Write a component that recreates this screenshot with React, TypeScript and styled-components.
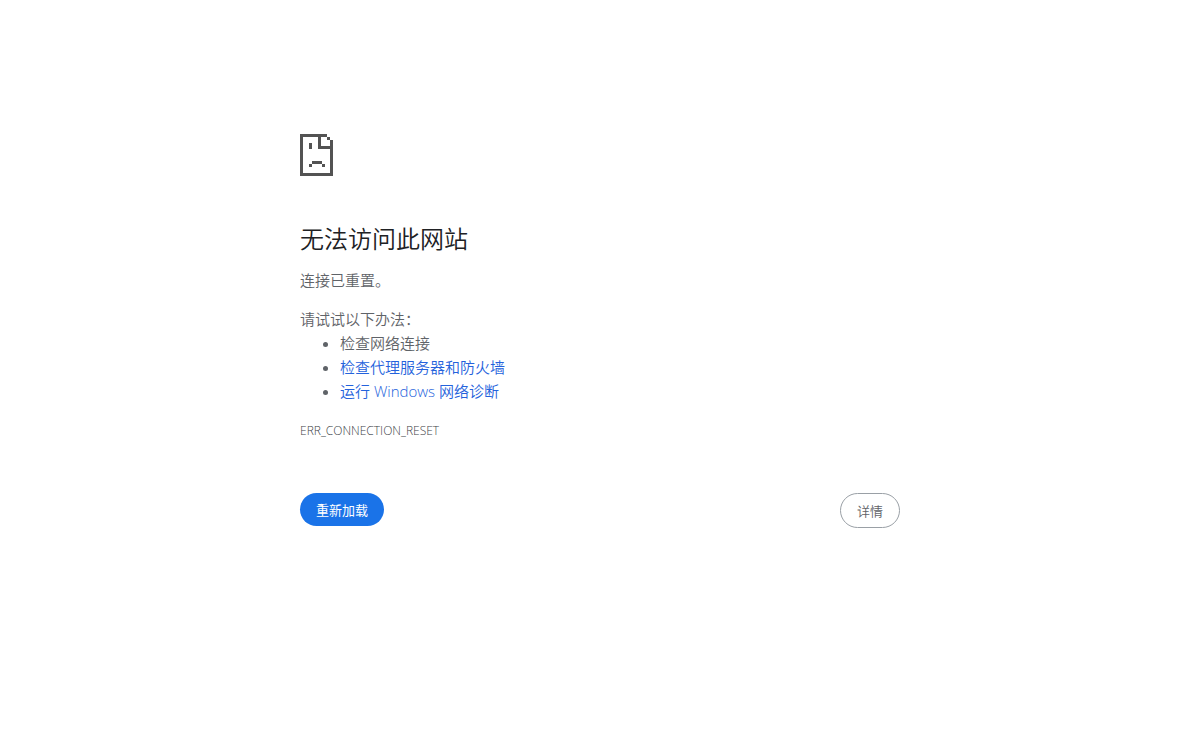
import React from 'react';
import styled, { createGlobalStyle, css } from 'styled-components';

const GlobalStyle = createGlobalStyle`
  body {
    margin: 0;
    background: #fff;
    color: #5f6368;
    font-family: 'Open Sans', 'Noto Sans CJK SC', sans-serif;
    font-size: 15px;
    font-weight: 350;
    line-height: 24px;
  }
`;

const Page = styled.main`
  box-sizing: border-box;
  max-width: 648px;
  margin: 0 auto;
  padding: 134px 24px 24px;
`;

const ErrorIcon = styled.svg`
  display: block;
  width: 33px;
  height: 42px;
  margin-bottom: 48px;
  fill: #535353;
`;

const Title = styled.h1`
  margin: 0 0 14px;
  color: #202124;
  font-size: 24px;
  font-weight: 350;
  line-height: 30px;
`;

const Paragraph = styled.p`
  margin: 0;
`;

const Suggestions = styled.section`
  margin-top: 15px;
`;

const SuggestionList = styled.ul`
  margin: 0;
  padding-left: 40px;
`;

const Link = styled.a`
  color: #2462dc;
  text-decoration: none;
`;

const ErrorCode = styled.p`
  margin: 16px 0 0;
  color: #404347;
  font-size: 12px;
`;

const Actions = styled.div`
  display: flex;
  justify-content: space-between;
  align-items: flex-start;
  margin-top: 50px;
`;

const Button = styled.button<{ $primary?: boolean }>`
  padding: 9px 16px 7px;
  border: 0;
  border-radius: 20px;
  font-family: inherit;
  font-size: 13px;
  font-weight: 350;
  line-height: 17px;
  cursor: pointer;

  ${({ $primary }) =>
    $primary
      ? css`
          background: #1a73e8;
          color: #fff;
          font-weight: 400;
        `
      : css`
          border: 1px solid #9aa0a6;
          background: #fff;
          color: #5f6368;
        `}
`;

export default function App() {
  return (
    <>
      <GlobalStyle />
      <Page>
        <ErrorIcon viewBox="0 0 33 42" shapeRendering="crispEdges" aria-hidden="true">
          <path
            d="M0 0h27v3h-6v9h9V6h3v36H0zM3 3v36h27V15H18V3zM27 3h3v3h-3zM9 9h3v6H9zM12 27h10v3H12zM9 30h3v3H9zM22 30h3v3h-3z"
            fillRule="evenodd"
          />
        </ErrorIcon>
        <Title>无法访问此网站</Title>
        <Paragraph>连接已重置。</Paragraph>
        <Suggestions>
          <Paragraph>请试试以下办法：</Paragraph>
          <SuggestionList>
            <li>检查网络连接</li>
            <li>
              <Link href="#proxy">检查代理服务器和防火墙</Link>
            </li>
            <li>
              <Link href="#diagnostics">运行 Windows 网络诊断</Link>
            </li>
          </SuggestionList>
        </Suggestions>
        <ErrorCode>ERR_CONNECTION_RESET</ErrorCode>
        <Actions>
          <Button type="button" $primary>
            重新加载
          </Button>
          <Button type="button">详情</Button>
        </Actions>
      </Page>
    </>
  );
}
